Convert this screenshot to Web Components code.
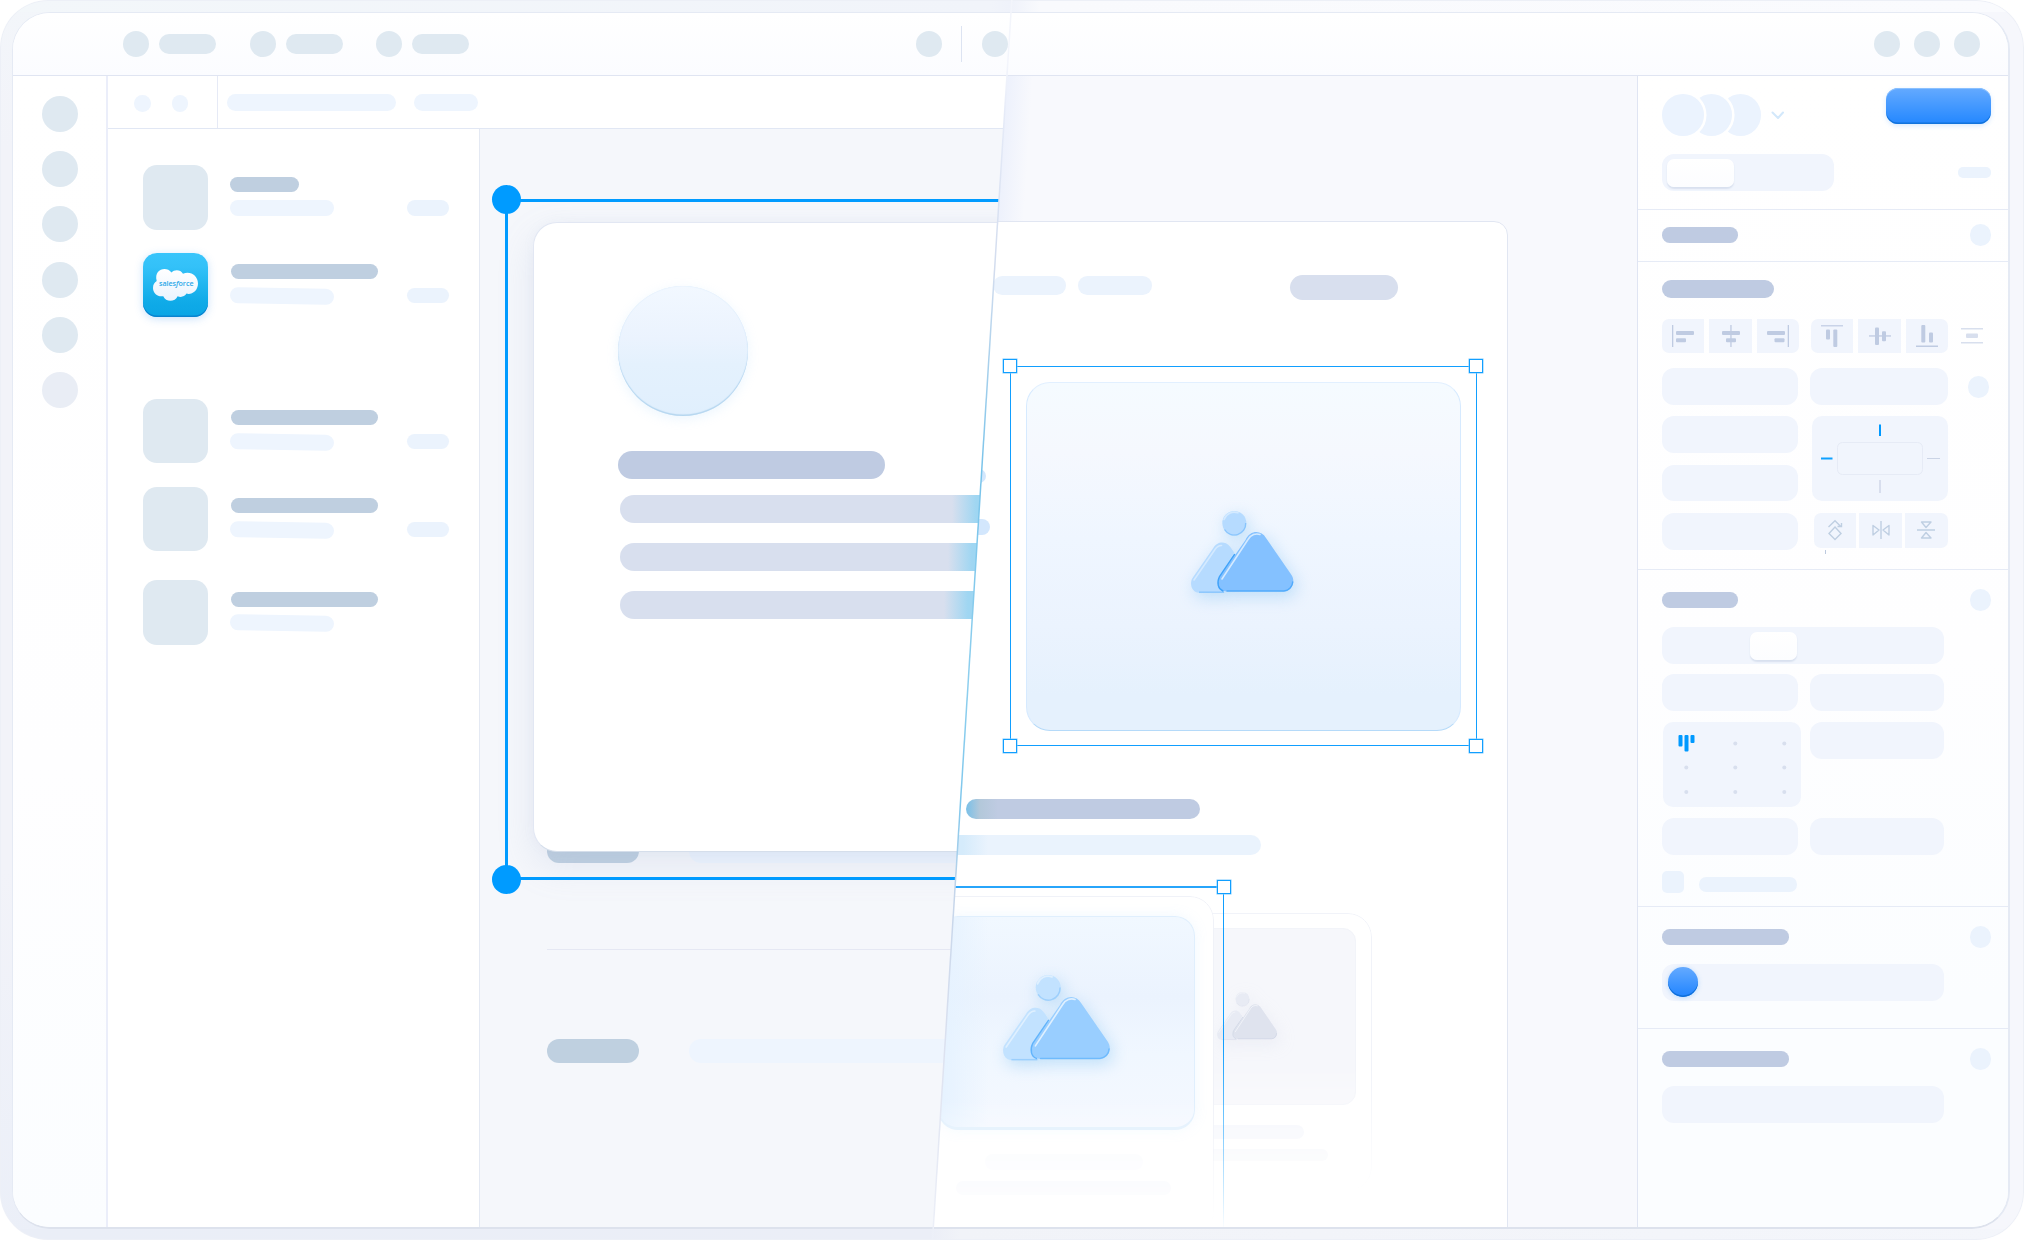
<!DOCTYPE html>
<html lang="en">
<head>
<meta charset="utf-8">
<title>Design workspace</title>
<style>
  html, body { margin: 0; background: #fff; }
  body { width: 2024px; height: 1240px; overflow: hidden; font-family: "Open Sans", "Liberation Sans", sans-serif; }
</style>
</head>
<body>
<app-shell>
  <top-bar slot="top"></top-bar>
  <tool-rail></tool-rail>
  <editor-view></editor-view>
  <inspector-panel></inspector-panel>
</app-shell>

<script>
const BASE = ':host, *, *::before, *::after { box-sizing: border-box; }';

function define(name, css, html) {
  customElements.define(name, class extends HTMLElement {
    constructor() {
      super();
      this.attachShadow({ mode: 'open' });
      this.shadowRoot.innerHTML = `<style>${BASE}${css}</style>${html}`;
    }
  });
}

// Placeholder block: w, h, r (radius) and tone
const TONES = {
  mist: '#dfe9f1',
  steel: '#bfd0e0',
  ice: '#eef5fe',
  sky: '#ebf3fd',
  slate: '#bfcbe2',
  haze: '#d8dfee',
  field: '#f1f5fd',
  lilac: '#e9edf5'
};

class SkBar extends HTMLElement {
  constructor() {
    super();
    this.attachShadow({ mode: 'open' });
  }

  connectedCallback() {
    const w = this.getAttribute('w');
    const h = this.getAttribute('h') || w;
    const r = this.getAttribute('r') || h / 2;
    const tone = TONES[this.getAttribute('tone')] || TONES.field;
    this.shadowRoot.innerHTML = `
      <style>
        :host { display: block; flex: none; width: ${w}px; height: ${h}px; border-radius: ${r}px; background: ${tone}; }
      </style><slot></slot>`;
  }
}
customElements.define('sk-bar', SkBar);

define('app-shell', `
  :host {
    display: block; position: relative; width: 2024px; height: 1240px; padding: 12px 14px 11px 12px;
    border-radius: 48px; overflow: hidden;
    background:
      linear-gradient(90deg, #eaeef7 0, #ebeef7 930px, #f1f3f8 960px, #f4f6fb 100%) 0 1229px / 100% 11px no-repeat,
      linear-gradient(90deg, #f3f7fa 0, #f1f4fa 990px, #eff2fa 1010px, #f9fafd 1040px, #fafbfe 100%) 0 0 / 100% 12px no-repeat,
      linear-gradient(90deg, transparent 50%, #f6f7fc 50%),
      linear-gradient(#f3f6fa, #f2f3f9 12%, #f2f3f9 70%, #ebeff8);
    box-shadow: inset 0 0 0 1px #edf0f7;
  }
  .window {
    height: 1217px; border: solid #e5eaf4; border-width: 1px 2px 2px 1px; border-bottom-color: #dde2ed; border-radius: 38px;
    overflow: hidden; background: #fff; display: flex; flex-direction: column;
  }
  .body { flex: 1; display: flex; min-height: 0; }
  svg { position: absolute; left: 0; top: 0; pointer-events: none; }
`, `
  <div class="window">
    <slot name="top"></slot>
    <div class="body"><slot></slot></div>
  </div>
  <svg width="2024" height="1240" viewBox="0 0 2024 1240">
    <defs>
      <linearGradient id="seam" gradientUnits="userSpaceOnUse" x1="0" y1="0" x2="0" y2="1240">
        <stop offset="0" stop-color="#f3f5fb"/>
        <stop offset=".05" stop-color="#f3f5fc"/>
        <stop offset=".09" stop-color="#e6ebf8"/>
        <stop offset=".22" stop-color="#d2dcee"/>
        <stop offset=".38" stop-color="#78c3ea"/>
        <stop offset=".55" stop-color="#8ecfee"/>
        <stop offset=".65" stop-color="#7fc7ec"/>
        <stop offset=".72" stop-color="#c5d5ea"/>
        <stop offset=".85" stop-color="#dde2f0"/>
        <stop offset="1" stop-color="#edf0f8"/>
      </linearGradient>
    </defs>
    <path d="M1011.8 0 L932.5 1240" stroke="url(#seam)" stroke-width="1.5" fill="none"/>
  </svg>
`);

define('top-bar', `
  :host { display: flex; flex: none; align-items: center; height: 63px; padding-left: 110px; padding-right: 28px; border-bottom: 1px solid #e0e5f2;
    background: linear-gradient(#fff, #fbfcff); }
  .tab { display: flex; align-items: center; gap: 10px; margin-right: 33.5px; }
  .mid { display: flex; align-items: center; margin-left: 413px; gap: 19px; }
  .mid i { width: 1px; height: 36px; background: #dde4f2; margin-right: 1px; }
  .end { display: flex; gap: 14px; margin-left: auto; }
`, `
  <div class="tab"><sk-bar w="26" tone="mist"></sk-bar><sk-bar w="57" h="20" tone="mist"></sk-bar></div>
  <div class="tab"><sk-bar w="26" tone="mist"></sk-bar><sk-bar w="57" h="20" tone="mist"></sk-bar></div>
  <div class="tab"><sk-bar w="26" tone="mist"></sk-bar><sk-bar w="57" h="20" tone="mist"></sk-bar></div>
  <div class="mid"><sk-bar w="26" tone="mist"></sk-bar><i></i><sk-bar w="26" tone="mist"></sk-bar></div>
  <div class="end"><sk-bar w="26" tone="mist"></sk-bar><sk-bar w="26" tone="mist"></sk-bar><sk-bar w="26" tone="mist"></sk-bar></div>
`);

define('tool-rail', `
  :host { display: flex; flex: none; flex-direction: column; gap: 19.2px; width: 95px; padding: 20px 0 0 29px;
    border-right: 2px solid #ebeefa; background: linear-gradient(#fff, #fefeff 60%, #fbfdff); }
`, `
  <sk-bar w="36" tone="mist"></sk-bar>
  <sk-bar w="36" tone="mist"></sk-bar>
  <sk-bar w="36" tone="mist"></sk-bar>
  <sk-bar w="36" tone="mist"></sk-bar>
  <sk-bar w="36" tone="mist"></sk-bar>
  <sk-bar w="36" tone="lilac"></sk-bar>
`);

// Mountains and sun, tinted through custom properties
define('picture-glyph', `
  :host { display: block; width: 103px; height: 82px; }
  svg { display: block; width: 100%; height: 100%; overflow: visible; filter: drop-shadow(3px 5px 8px var(--glow, rgba(120,190,240,.4))); }
  .far { fill: var(--far, #b6dbff); }
  .near { fill: var(--near, #84c1ff); }
  .edge { fill: none; stroke: var(--edge, #5fb0fb); stroke-width: 1.4; }
  .lip { fill: none; stroke: var(--lip, #3fa2fa); stroke-width: 1.4; stroke-linecap: round; }
  .shine { fill: none; stroke: var(--shine, #d4eaff); stroke-width: 1.6; stroke-linecap: round; }
`, `
  <svg viewBox="0 0 103 82">
    <circle class="far" cx="43.3" cy="12" r="12"/>
    <path class="edge" opacity=".55" d="M33.5 18.5A11.4 11.4 0 0 0 54.7 12"/>
    <path class="shine" d="M33 8.5A11 11 0 0 1 47 1.8"/>
    <path class="far" d="M22 37.5C26 30 34 30 38 34.5C41 38 43 41 43 42L28 66C25 73 28 80 35 81.7L8 81.7C1 81.7-2 73 1.5 67Z"/>
    <path class="edge" opacity=".55" d="M8 81.2H33"/>
    <path class="shine" d="M3 69L24 38.5C26 35.5 28 34.5 30.5 34.5"/>
    <path class="near" d="M54.5 29C59 19 70 18.5 75 27L100.5 64C105 71 101 80.5 92.5 80.5L36 80.5C28 80.5 25 72 29 65.5Z"/>
    <path class="lip" d="M43.5 43.5L28.5 65.5C25.500 72 27 78 32 80"/>
    <path class="lip" opacity=".75" d="M36 80H93C98 79.5 101.5 75.5 101.7 71"/>
    <path class="shine" d="M31 68L57 28.5C60 23.5 65 22 69 23.5"/>
  </svg>
`);

// One row of the layer list
define('layer-row', `
  :host { display: flex; height: 64.5px; padding-left: 35px; }
  .thumb { flex: none; width: 64.5px; height: 64.5px; border-radius: 14px; background: #dfe9f1; }
  .lines { width: 199px; padding: 11.5px 0 0 22.5px; }
  .title { height: 15px; width: 147px; border-radius: 8px; background: #bfcfe0; margin-left: .5px; }
  .sub { height: 15.5px; width: 103.5px; border-radius: 8px; background: #eef5fe; margin-top: 8.5px; transform: skewY(.9deg); }
  .tag { width: 42.5px; height: 15.5px; border-radius: 8px; background: #ebf3fd; margin-top: 35px; }
  :host([short]) .title { width: 69px; margin-left: 0; }
  :host([short]) .sub { transform: none; }
  :host([untagged]) .tag { display: none; }
  :host([app]) .thumb { background: linear-gradient(#39c5fb, #33c1f8 22%, #10abe8 75%, #0aa5e5);
    box-shadow: inset 0 -1.5px 0 #0a83cf, 0 2px 8px rgba(70,150,240,.28); }
`, `
  <div class="thumb"><slot></slot></div>
  <div class="lines"><div class="title"></div><div class="sub"></div></div>
  <div class="tag"></div>
`);

define('salesforce-mark', `
  :host { display: block; width: 64px; height: 64px; }
  svg { display: block; }
  text { font: 600 7.6px "Open Sans", sans-serif; fill: #2aa7e8; }
`, `
  <svg width="64" height="64" viewBox="0 0 64 64">
    <defs><linearGradient id="c" x1="0" y1="0" x2="0" y2="1"><stop offset="0" stop-color="#fff"/><stop offset="1" stop-color="#e9f3fe"/></linearGradient></defs>
    <path fill="url(#c)" d="M28.5 19.5C31.5 16.3 37.5 16.5 40 20.8C47.5 17.600 55 23 55 30.500C55 38 48.5 42 43.5 40.6C41.5 44 37.5 44.6 34.6 43.2C32.2 49.2 22.8 49.5 20.3 43.2C14.8 44.2 10 40.5 10 35C10 31.5 11.5 29.3 13.7 28C10.6 16.6 23 12.6 28.5 19.5Z"/>
    <text x="16" y="33" textLength="34.5" lengthAdjust="spacingAndGlyphs">sales<tspan font-style="italic">f</tspan>orce</text>
  </svg>
`);

define('left-app', `
  :host { display: flex; flex-direction: column; width: 100%; height: 100%; }
  .bar { flex: none; display: flex; height: 53px; border-bottom: 1px solid #e1e7f4; }
  .dots { display: flex; gap: 21px; width: 110px; padding: 19px 0 0 26px; border-right: 1px solid #e6eaf6; }
  .crumbs { display: flex; gap: 17.5px; padding: 18px 0 0 9px; }
  .main { flex: 1; display: flex; }
  .list { width: 372px; border-right: 1px solid #e4e9f3; padding-top: 36px; }
  layer-row { margin-bottom: 23.3px; }
  .gap { margin-bottom: 81.5px; }
  .gap2 { margin-bottom: 29px; }
  .stage { flex: 1; position: relative; background: #f5f7fb; overflow: hidden; }
  .row { position: absolute; left: 67px; display: flex; gap: 50px; }
  .rule { position: absolute; left: 67px; top: 820px; width: 420px; height: 1px; background: #e5e8f3; }
  .card { position: absolute; left: 52.5px; top: 92.5px; width: 560px; height: 630px; padding: 63px 0 0 84.5px;
    border: 1px solid #e2e7f3; border-bottom: 1.5px solid #d5deeb; border-radius: 24px; background: #fff;
    box-shadow: 0 14px 36px rgba(150,165,205,.18), 0 0 12px rgba(150,165,205,.06); }
  .avatar { width: 130px; height: 130px; border-radius: 50%; background: linear-gradient(#f2f8ff, #ebf3fe 40%, #e4f1fd 60%, #e0effd);
    box-shadow: inset 0 -1.5px 1px #b5d6ef, inset 0 0 1px #c9e0f6, 0 3px 12px rgba(160,210,250,.2); }
  .card sk-bar { margin: 35px 0 16.5px; }
  .line { height: 28px; margin: 0 0 20px 2px; border-radius: 14px 0 0 14px; background: linear-gradient(90deg, #d8dfee var(--a), #9fd6f2 var(--b)); }
  .sel { position: absolute; left: 24.5px; top: 70px; width: 600px; height: 681px; border: 3px solid #009bff; }
  .knob { position: absolute; left: 12px; width: 29px; height: 29px; border-radius: 50%; background: #009bff; }
`, `
  <div class="bar">
    <div class="dots"><sk-bar w="16.5" tone="ice"></sk-bar><sk-bar w="16.5" tone="ice"></sk-bar></div>
    <div class="crumbs"><sk-bar w="169" h="17" tone="ice"></sk-bar><sk-bar w="64" h="17" tone="ice"></sk-bar></div>
  </div>
  <div class="main">
    <div class="list">
      <layer-row short></layer-row>
      <layer-row app class="gap"><salesforce-mark></salesforce-mark></layer-row>
      <layer-row></layer-row>
      <layer-row class="gap2"></layer-row>
      <layer-row untagged></layer-row>
    </div>
    <div class="stage">
      <div class="row" style="top:710px"><sk-bar w="92" h="24" tone="steel"></sk-bar><sk-bar w="380" h="24" tone="ice"></sk-bar></div>
      <div class="rule"></div>
      <div class="row" style="top:910px"><sk-bar w="92" h="24" tone="steel"></sk-bar><sk-bar w="380" h="24" tone="ice"></sk-bar></div>
      <div class="card">
        <div class="avatar"></div>
        <sk-bar w="267" h="28" tone="slate"></sk-bar>
        <div class="line" style="--a:332px;--b:356px"></div>
        <div class="line" style="--a:328px;--b:352px"></div>
        <div class="line" style="--a:324px;--b:348px"></div>
      </div>
      <div class="sel"></div>
      <div class="knob" style="top:56px"></div>
      <div class="knob" style="top:735.5px"></div>
    </div>
  </div>
`);

define('right-app', `
  :host { display: block; position: absolute; inset: 0; background: #f8f9fd; clip-path: polygon(899px 0, 100% 0, 100% 100%, 825.3px 100%); }
  .shade { position: absolute; left: 899px; top: 0; width: 26px; height: 146px; transform-origin: 0 0; transform: skewX(-3.66deg); background: linear-gradient(90deg, #edf1fc, #f8f9fd); }
  .page { position: absolute; left: 700px; top: 145px; width: 700px; height: 1020px; border: 1px solid #e1e6f2; border-radius: 14px; background: #fff; }
  .nav { position: absolute; left: 885px; top: 198.5px; display: flex; align-items: flex-start; gap: 12.5px; }
  .nav sk-bar { margin-top: 1.5px; }
  .nav :last-child { margin: 0 0 0 125px; }
  .bit { position: absolute; border-radius: 8px; background: #d3e7fd; }
  .sel { position: absolute; border: 1.5px solid #119fff; }
  .grip { position: absolute; width: 14px; height: 14px; border: 1.5px solid #119fff; background: #fff; box-shadow: 0 0 0 .5px #7cc9ff; }
  .photo { display: flex; align-items: center; justify-content: center; }
  .hero { position: absolute; left: 918px; top: 305.5px; width: 435px; height: 349px; border-radius: 24px; border: 1px solid #d6eaff; border-top-color: #e2f0ff; border-bottom-color: #b5daf9;
    background: linear-gradient(#f5fbff, #f5f8fe 20%, #eff6ff 45%, #ebf3fe 70%, #e5f1fd 90%); }
  .hero picture-glyph { margin: -8px 0 0 -2px; }
  .bars { position: absolute; left: 780px; top: 722.5px; }
  .head { margin-left: 77.5px; width: 234.5px; height: 20.5px; border-radius: 11px; background: linear-gradient(90deg, #79c0e8, #b3c8da 14px, #bfcbe2 32px); }
  .text { margin-top: 16px; width: 373px; height: 20px; border-radius: 0 10px 10px 0; background: linear-gradient(90deg, #d5ebfb 75px, #eaf3fd 100px); }
  .back { position: absolute; left: 1000px; top: 837px; width: 264px; height: 278px; padding: 14px 15px; border: 1px solid #f1f3f9; border-radius: 24px; background: #fff;
    mask: linear-gradient(#000 55%, transparent); }
  .back .photo { height: 177px; border-radius: 13px; background: #f6f7fb; border: 1px solid #f2f4f9; justify-content: flex-start; padding-left: 92px; }
  .back picture-glyph { width: 60.5px; height: 48px; margin-top: -2px; --far: #e8ebf4; --near: #dfe3ee; --edge: #d6dbe8; --lip: #ced5e4; --shine: #f1f3f9; --glow: rgba(200,206,225,.2); }
  .back i { display: block; height: 14px; width: 180px; border-radius: 8px; margin-top: 19.5px; background: #f2f4fb; }
  .back i + i { width: 204px; height: 12px; margin-top: 10px; background: #f1f3f8; }
  .wash { position: absolute; left: 781px; top: 821px; width: 324px; height: 330px; border-radius: 24px 24px 0 0; background: #fff; }
  .front { position: absolute; left: 780px; top: 820px; width: 326px; height: 340px; padding: 18.5px 18px 0 49px; border-radius: 24px; border: 1px solid #f0f2f8; background: #fff;
    mask: linear-gradient(#000 60%, transparent 96%); }
  .front .photo { height: 214px; border-radius: 20px; border: 1.5px solid #e0effd; border-bottom-width: 3px; background: linear-gradient(90deg, #e5f2ff, transparent 50px), linear-gradient(#f1f8ff, #ebf3fe 38%, #f0f7ff 65%, #f4f8ff); box-shadow: 0 0 14px rgba(150,200,250,.13); }
  .front picture-glyph { width: 107.5px; height: 85.5px; margin: -8px 0 0 -19px; --far: #c2e2ff; --near: #99ceff; --edge: #7cc0fb; --lip: #62b4fc; --shine: #dff0ff; }
  .ghost { height: 16px; width: 158px; border-radius: 8px; background: #fafbfe; margin: 24px 0 11px 47px; }
  .ghost + .ghost { width: 215px; height: 14px; margin: 0 0 0 18px; background: #f3f5fb; }
  .fade { position: absolute; left: 1114.5px; top: 818px; width: 1.5px; height: 333px; background: linear-gradient(#119fff 45%, rgba(17,159,255,.02)); }
  .edge { position: absolute; left: 780px; top: 810px; width: 330px; height: 1.5px; background: #27a5fb; }
`, `
  <div class="shade"></div>
  <div class="page"></div>
  <div class="nav"><sk-bar w="72.5" h="18.5" tone="sky"></sk-bar><sk-bar w="74" h="18.5" tone="sky"></sk-bar><sk-bar w="108" h="25.5" tone="haze"></sk-bar></div>
  <div class="bit" style="left:840px;top:393px;width:38px;height:14px"></div>
  <div class="bit" style="left:840px;top:443px;width:42px;height:16px"></div>
  <div class="sel" style="left:902px;top:290px;width:466.5px;height:380px"></div>
  <div class="grip" style="left:895px;top:283px"></div>
  <div class="grip" style="left:1361px;top:283px"></div>
  <div class="grip" style="left:895px;top:663px"></div>
  <div class="grip" style="left:1361px;top:663px"></div>
  <div class="photo hero"><picture-glyph></picture-glyph></div>
  <div class="bars"><div class="head"></div><div class="text"></div></div>
  <div class="back"><div class="photo"><picture-glyph></picture-glyph></div><i></i><i></i></div>
  <div class="wash"></div>
  <div class="front"><div class="photo"><picture-glyph></picture-glyph></div><div class="ghost"></div><div class="ghost"></div></div>
  <div class="edge"></div>
  <div class="fade"></div>
  <div class="grip" style="left:1109px;top:803.5px"></div>
`);

define('editor-view', `
  :host { display: block; position: relative; flex: none; width: 1529px; }
`, `<left-app></left-app><right-app></right-app>`);

define('inspector-section', `
  :host { display: block; padding: 0 17px 0 24px; border-bottom: 1px solid #e6ebf6; }
  header { display: flex; align-items: center; justify-content: space-between; }
`, `<header><slot name="title"></slot><slot name="action"></slot></header><slot></slot>`);

define('tool-cell', `
  :host { display: flex; flex: none; align-items: center; justify-content: center; width: 42.3px; height: 34px; background: #f1f5fd; }
  :host([first]) { border-radius: 7px 0 0 7px; }
  :host([last]) { border-radius: 0 7px 7px 0; }
`, `<slot></slot>`);

define('inspector-panel', `
  :host { display: block; flex: none; width: 371px; border-left: 1px solid #e0e5f3; background: linear-gradient(#fff, #fefeff 50%, #fbfdff 80%); }
  .people { display: flex; height: 60px; padding-top: 12px; align-items: flex-start; }
  .people i { width: 41.5px; height: 41.5px; margin: 6px -12.7px 0 0; border-radius: 50%; background: #ebf3fe; box-shadow: 0 0 0 2.5px #fff; position: relative; }
  .people svg { margin: 22px 0 0 22.5px; }
  .cta { width: 105px; height: 36px; margin-left: auto; border-radius: 12px; background: linear-gradient(#64aaff, #2387ff);
    box-shadow: inset 0 1px 0 #8ac0ff, inset 0 -1.5px 0 #1173dc, 0 2px 5px rgba(60,150,255,.2); }
  .mode { display: flex; align-items: center; justify-content: space-between; padding-top: 18px; }
  .seg { display: flex; padding: 4.5px; }
  .seg b { display: block; height: 28px; border-radius: 7px; background: linear-gradient(#fff, #fcfdff); box-shadow: 0 1.5px 1.5px #d9e1ef; }
  .cells { display: flex; gap: 5.2px; margin: 21px 0 15px; }
  .cells > :nth-child(3) { margin-right: 6.5px; }
  .cells > svg { flex: none; margin: 9px 0 0 8px; }
  svg { display: block; }
  .grid { display: grid; grid-template-columns: 136px 138px; column-gap: 12px; row-gap: 11.7px; }
  .span { grid-row: span 2; }
  .box { position: relative; width: 136px; height: 85px; margin-left: 2px; border-radius: 10px; background: #f1f5fd; }
  .flips { display: flex; gap: 3px; margin: -.5px 0 0 3.5px; }
  .flips tool-cell { height: 35px; width: 42.8px; }
  .sec2 .grid { grid-template-columns: 136px 133.5px; row-gap: 11px; }
  .color { padding: 3.5px 0 0 6px; }
  .color i { display: block; width: 30px; height: 30px; border-radius: 50%; background: linear-gradient(#64aaff, #2084ff); box-shadow: inset 0 -1.5px 0 #0f6fd8, 0 1px 5px rgba(60,160,255,.3); }
  .check { display: flex; gap: 14.5px; padding-top: 15.5px; }
  .check :last-child { margin-top: 6.5px; }
`, `
  <inspector-section style="height:134px">
    <div class="people">
      <i style="z-index:3"></i><i style="z-index:2"></i><i></i>
      <svg width="14" height="12" viewBox="0 0 14 12" fill="none" stroke="#d3e8fb" stroke-width="2" stroke-linecap="round" stroke-linejoin="round"><path d="M1.5 2.5L7 8L12 2.5"/></svg>
      <div class="cta"></div>
    </div>
    <div class="mode">
      <sk-bar w="171.5" h="36.5" r="12"><div class="seg"><b style="width:67px"></b></div></sk-bar>
      <sk-bar w="33" h="10.5" r="5" tone="sky"></sk-bar>
    </div>
  </inspector-section>

  <inspector-section style="height:52px;padding-top:14px">
    <sk-bar slot="title" w="76" h="15.5" tone="slate"></sk-bar>
    <sk-bar slot="action" w="21.5" tone="sky"></sk-bar>
  </inspector-section>

  <inspector-section style="height:308px;padding-top:18px">
    <sk-bar slot="title" w="112" h="18" tone="slate"></sk-bar>
    <div class="cells">
      <tool-cell first><svg width="22" height="22" fill="#bfcbe2"><rect width="1.3" height="22"/><rect x="4" y="6" width="18" height="4" rx="1"/><rect x="4" y="13.3" width="10" height="4" rx="1"/></svg></tool-cell>
      <tool-cell><svg width="18" height="22" fill="#bfcbe2"><rect x="8.3" width="1.3" height="22"/><rect y="6" width="18" height="4" rx="1"/><rect x="4" y="13.3" width="10" height="4" rx="1"/></svg></tool-cell>
      <tool-cell last><svg width="22" height="22" fill="#bfcbe2"><rect x="20.7" width="1.3" height="22"/><rect y="6" width="18" height="4" rx="1"/><rect x="7.5" y="13.3" width="10" height="4" rx="1"/></svg></tool-cell>
      <tool-cell first><svg width="22" height="22" fill="#bfcbe2"><rect width="22" height="1.5" opacity=".8"/><rect x="5" y="4.5" width="4" height="10" rx="1"/><rect x="12.3" y="4.5" width="4" height="17.5" rx="1"/></svg></tool-cell>
      <tool-cell><svg width="22" height="22" fill="#bfcbe2"><rect y="10.3" width="22" height="1.3"/><rect x="6" y="2.5" width="4" height="17.5" rx="1"/><rect x="13" y="6.2" width="4" height="10" rx="1"/></svg></tool-cell>
      <tool-cell last><svg width="22" height="22" fill="#bfcbe2"><rect y="20.5" width="22" height="1.5"/><rect x="5.3" y="0" width="4" height="17.5" rx="1"/><rect x="13" y="7.5" width="4" height="10" rx="1"/></svg></tool-cell>
      <svg width="22" height="16" fill="#d8dfee"><rect width="22" height="1.5"/><rect x="5" y="5.5" width="12" height="4.5" rx="1"/><rect y="14" width="22" height="1.5"/></svg>
    </div>
    <div class="grid" style="grid-template-columns:136px 138px 40px">
      <sk-bar w="136" h="36.7" r="12"></sk-bar>
      <sk-bar w="138" h="36.7" r="12"></sk-bar>
      <sk-bar w="21.5" tone="sky" style="margin:8px 0 0 7.5px"></sk-bar>
      <sk-bar w="136" h="36.7" r="12"></sk-bar>
      <div class="box span" style="grid-column:span 2">
        <svg width="136" height="85" fill="none">
          <rect x="25.5" y="26.5" width="85" height="32" rx="5" stroke="#e6ebf6"/>
          <path d="M68 8.5V20" stroke="#0099ff" stroke-width="2"/>
          <path d="M9 42.5H20.5" stroke="#0fa0ff" stroke-width="2"/>
          <path d="M115 42.5H128" stroke="#cbd4e6"/>
          <path d="M68 64V77" stroke="#d5dcec" stroke-width="1.8"/>
        </svg>
      </div>
      <sk-bar w="136" h="36.7" r="12"></sk-bar>
      <sk-bar w="136" h="36.7" r="12"></sk-bar>
      <div class="flips" style="grid-column:span 2">
        <tool-cell first><svg width="16" height="22" fill="none" stroke="#bfcfe2" stroke-width="1.4"><path d="M8 8L14 14.5L8 20.5L2 14.5ZM1.5 8L8 1.8L13.5 7.2M14.5 4V7.5H10.5"/></svg></tool-cell>
        <tool-cell><svg width="20" height="20" fill="none" stroke="#bfcfe2" stroke-width="1.4" stroke-linejoin="round"><path d="M10 1V19M2 5.5V15L8 10ZM18 5.5V15L12 10Z"/></svg></tool-cell>
        <tool-cell last><svg width="20" height="20" fill="none" stroke="#bfcfe2" stroke-width="1.4" stroke-linejoin="round"><path d="M1 10H19M5.5 2H15L10 7.5ZM5.5 18H15L10 12.5Z"/></svg></tool-cell>
      </div>
    </div>
    <svg width="2" height="4" fill="#bcc9de" style="margin-left:163px"><rect width="1" height="4"/></svg>
  </inspector-section>

  <inspector-section class="sec2" style="height:337px;padding-top:19px">
    <sk-bar slot="title" w="76" h="15.5" tone="slate"></sk-bar>
    <sk-bar slot="action" w="21.5" tone="sky"></sk-bar>
    <sk-bar w="281.5" h="37" r="12" style="margin:16.5px 0 10px"><div class="seg"><b style="width:47px;margin-left:83.5px"></b></div></sk-bar>
    <div class="grid">
      <sk-bar w="136" h="37" r="12"></sk-bar>
      <sk-bar w="133.5" h="37" r="12"></sk-bar>
      <div class="box" style="width:138.5px;margin-left:.5px">
        <svg width="138" height="85" fill="#d8dfee">
          <g fill="#0099ff"><rect x="15.5" y="13" width="4" height="11.5" rx="1"/><rect x="21.5" y="13" width="4" height="16.5" rx="1"/><rect x="27.5" y="13" width="4" height="8" rx="1"/></g>
          <circle cx="72.3" cy="21.5" r="2"/><circle cx="121.3" cy="21.5" r="2"/>
          <circle cx="23.3" cy="45.5" r="2"/><circle cx="72.3" cy="45.5" r="2"/><circle cx="121.3" cy="45.5" r="2"/>
          <circle cx="23.3" cy="70" r="2"/><circle cx="72.3" cy="70" r="2"/><circle cx="121.3" cy="70" r="2"/>
        </svg>
      </div>
      <sk-bar w="133.5" h="37" r="12"></sk-bar>
      <sk-bar w="136" h="37" r="12"></sk-bar>
      <sk-bar w="133.5" h="37" r="12"></sk-bar>
    </div>
    <div class="check"><sk-bar w="22" r="5" tone="sky"></sk-bar><sk-bar w="98.5" h="14.5" tone="sky"></sk-bar></div>
  </inspector-section>

  <inspector-section style="height:122px;padding-top:19px">
    <sk-bar slot="title" w="127" h="15.5" tone="slate"></sk-bar>
    <sk-bar slot="action" w="21.5" tone="sky"></sk-bar>
    <sk-bar w="281.5" h="37" r="12" style="margin-top:16px"><div class="color"><i></i></div></sk-bar>
  </inspector-section>

  <inspector-section style="height:190px;padding-top:19px;border:0">
    <sk-bar slot="title" w="127" h="15.5" tone="slate"></sk-bar>
    <sk-bar slot="action" w="21.5" tone="sky"></sk-bar>
    <sk-bar w="281.5" h="37" r="12" style="margin-top:16px"></sk-bar>
  </inspector-section>
`);
</script>
</body>
</html>
